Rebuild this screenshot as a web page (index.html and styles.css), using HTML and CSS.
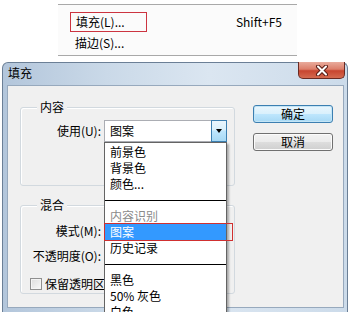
FILE: index.html
```html
<!DOCTYPE html>
<html lang="zh-CN">
<head>
<meta charset="utf-8">
<title>填充</title>
<link rel="stylesheet" href="styles.css">
</head>
<body>
<div class="menu">
  <div class="menu-items">
    <div class="menu-row first"><span class="menu-label mark">填充(L)...</span><span class="shortcut">Shift+F5</span></div>
    <div class="menu-row second"><span class="menu-label">描边(S)...</span></div>
  </div>
</div>

<div class="dialog">
  <div class="titlebar">
    <span class="title">填充</span>
    <span class="close">
      <svg width="14" height="11" viewBox="0 0 14 11"><path d="M3 1.5 L11 9.5 M11 1.5 L3 9.5" stroke="#5b1d15" stroke-width="4" stroke-linecap="round" fill="none"/><path d="M3 1.5 L11 9.5 M11 1.5 L3 9.5" stroke="#ffffff" stroke-width="2" stroke-linecap="round" fill="none"/></svg>
    </span>
  </div>
  <div class="body">
    <div class="left">
      <div class="group group-content">
        <div class="group-title">内容</div>
        <div class="row first-row">
          <span class="row-label">使用(U):</span>
          <div class="combo">
            <span class="combo-text">图案</span>
            <span class="combo-arrow"><span class="tri"></span></span>
            <div class="droplist">
              <div class="item">前景色</div>
              <div class="item">背景色</div>
              <div class="item">颜色...</div>
              <div class="sep"></div>
              <div class="item muted">内容识别</div>
              <div class="item selected">图案<span class="mark-box"></span></div>
              <div class="item">历史记录</div>
              <div class="sep"></div>
              <div class="item">黑色</div>
              <div class="item">50% 灰色</div>
              <div class="item">白色</div>
            </div>
          </div>
        </div>
      </div>
      <div class="group group-blend">
        <div class="group-title">混合</div>
        <div class="row first-row blend-first">
          <span class="row-label">模式(M):</span>
          <div class="combo plain"><span class="combo-text">正常</span></div>
        </div>
        <div class="row second-row">
          <span class="row-label">不透明度(O):</span>
          <div class="combo plain small"><span class="combo-text">100</span></div>
        </div>
        <div class="check-row">
          <span class="checkbox"></span>
          <span class="check-label">保留透明区域</span>
        </div>
      </div>
    </div>
    <div class="right">
      <div class="btn default">确定</div>
      <div class="btn">取消</div>
    </div>
  </div>
</div>
</body>
</html>
```
FILE: styles.css
```css
html, body {
  margin: 0;
  padding: 0;
  overflow: hidden;
}
body {
  width: 352px;
  height: 312px;
  background: #ffffff;
  font: 12px/16px "Noto Sans CJK SC", sans-serif;
  color: #000;
}

/* ---------- top menu ---------- */
.menu {
  margin-left: 58px;
  width: 239px;
  padding-top: 4px;
}
.menu-items {
  box-sizing: border-box;
  height: 52px;
  border-top: 1px solid #a9a9a9;
  border-bottom: 1px solid #a9a9a9;
  background: #fbfbfb;
  padding-top: 7px;
}
.menu-row {
  display: flex;
  align-items: center;
}
.menu-row.first {
  height: 20px;
  padding-left: 12px;
  padding-right: 15px;
}
.menu-row.second {
  height: 16px;
  margin-top: 3px;
  padding-left: 17px;
}
.mark {
  box-sizing: border-box;
  width: 77px;
  height: 20px;
  line-height: 18px;
  padding-left: 5px;
  border: 1px solid #cc3440;
}
.shortcut {
  margin-left: auto;
}

/* ---------- dialog ---------- */
.dialog {
  box-sizing: border-box;
  margin: 6px 0 0 2px;
  width: 346px;
  height: 262px;
  border: 1px solid #6b7f96;
  border-bottom: none;
  border-radius: 6px 6px 0 0;
  background: linear-gradient(to right, #b3c6db 0%, #cad9e8 30%, #dbe6f1 60%, #ccdbea 100%);
}
.titlebar {
  display: flex;
  align-items: flex-start;
  height: 22px;
  padding-left: 5px;
}
.title {
  margin-top: 2px;
}
.close {
  box-sizing: border-box;
  margin-left: auto;
  margin-right: 2px;
  margin-top: -1px;
  width: 47px;
  height: 17px;
  border: 1px solid #6a2a22;
  border-top: none;
  border-radius: 0 0 5px 5px;
  background: linear-gradient(#e9ab9c 0%, #dc7e6a 45%, #c8452f 55%, #d46a4f 100%);
  display: flex;
  align-items: center;
  justify-content: center;
}
.body {
  box-sizing: border-box;
  margin: 0 3px 0 4px;
  height: 223px;
  border: 1px solid #97a9bd;
  background: #f0f0f0;
  display: flex;
}
.left {
  margin-left: 12px;
  padding-top: 21px;
  width: 215px;
}
.group {
  box-sizing: border-box;
  border: 1px solid #d2d9df;
  border-radius: 3px;
  box-shadow: inset 1px 1px 0 #ffffff;
}
.group-content {
  height: 79px;
}
.group-blend {
  height: 89px;
  margin-top: 19px;
}
.group-title {
  margin: -9px 0 0 16px;
  padding: 0 3px;
  width: fit-content;
  background: #f0f0f0;
}
.row {
  display: flex;
  align-items: center;
  height: 22px;
}
.first-row {
  margin-top: 5px;
}
.blend-first {
  margin-top: 7px;
}
.second-row {
  margin-top: 3px;
}
.row-label {
  width: 80px;
  text-align: right;
  margin-right: 3px;
}
.combo {
  position: relative;
  box-sizing: border-box;
  width: 123px;
  height: 22px;
  border: 1px solid #abadb3;
  background: #ffffff;
  display: flex;
  align-items: center;
}
.combo.small {
  width: 60px;
}
.combo-text {
  flex: 1;
  padding-left: 5px;
}
.combo-arrow {
  box-sizing: border-box;
  width: 16px;
  height: 22px;
  margin: -1px -1px -1px 0;
  border: 1px solid #3c7fb1;
  background: linear-gradient(#eaf6fd 0%, #d9f0fc 45%, #bee6fd 50%, #a7d9f5 100%);
  display: flex;
  align-items: center;
  justify-content: center;
}
.tri {
  width: 0;
  height: 0;
  border-top: 4px solid #000;
  border-left: 3.5px solid transparent;
  border-right: 3.5px solid transparent;
}
.droplist {
  position: absolute;
  z-index: 10;
  left: -1px;
  top: 21px;
  box-sizing: border-box;
  width: 123px;
  height: 200px;
  padding-top: 1px;
  border: 1px solid #646464;
  background: #ffffff;
  box-shadow: 2px 2px 2px rgba(0, 0, 0, 0.3);
}
.item {
  position: relative;
  height: 16px;
  padding-left: 5px;
  white-space: nowrap;
}
.item.muted {
  color: #8a8a8a;
}
.item.selected {
  background: #3399ff;
  color: #ffffff;
}
.mark-box {
  position: absolute;
  left: -1px;
  top: -1px;
  bottom: -1px;
  right: -7px;
  border: 1px solid #d03030;
}
.sep {
  height: 16px;
  display: flex;
  align-items: center;
}
.sep::before {
  content: "";
  flex: 1;
  height: 1px;
  background: #000;
}
.check-row {
  display: flex;
  align-items: center;
  height: 16px;
  margin-top: 9px;
  padding-left: 9px;
}
.checkbox {
  box-sizing: border-box;
  width: 12px;
  height: 12px;
  border: 1px solid #8f8f8f;
  background: linear-gradient(135deg, #dcdcdc, #f8f8f8);
  box-shadow: inset 0 0 0 1px #f4f4f4;
}
.check-label {
  margin-left: 3px;
  white-space: nowrap;
}
.right {
  margin-left: 18px;
  padding-top: 19px;
}
.btn {
  box-sizing: border-box;
  width: 80px;
  height: 18px;
  line-height: 16px;
  text-align: center;
  border: 1px solid #707070;
  border-radius: 3px;
  background: linear-gradient(#f2f2f2 0%, #ebebeb 50%, #dddddd 51%, #cfcfcf 100%);
  box-shadow: inset 0 0 0 1px #fbfbfb;
}
.btn + .btn {
  margin-top: 10px;
}
.btn.default {
  border-color: #3c7fb1;
  background: linear-gradient(#eaf6fd 0%, #d9f0fc 50%, #bee6fd 51%, #a7d9f5 100%);
  box-shadow: inset 0 0 0 1px #c4e5f6;
}
```
